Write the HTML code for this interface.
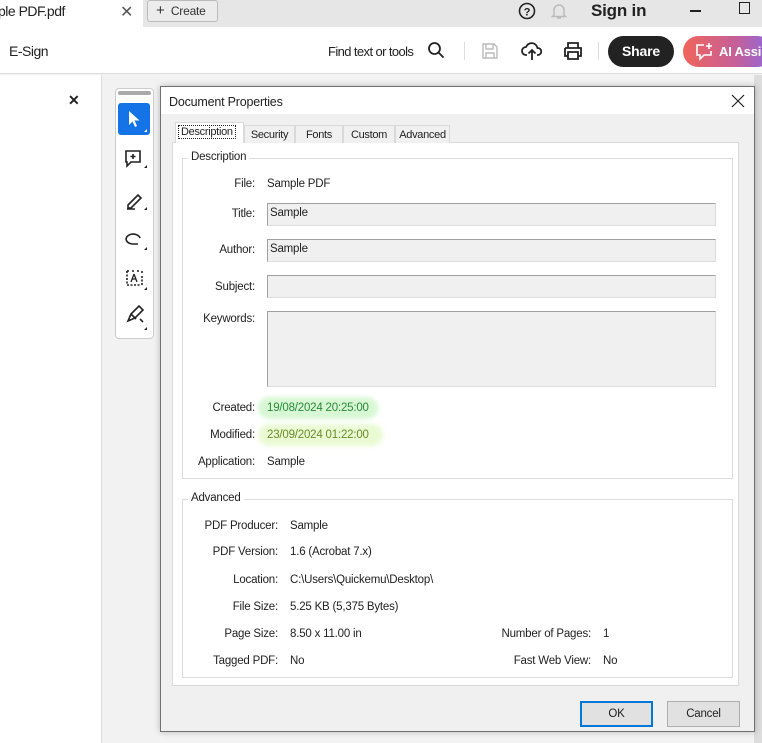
<!DOCTYPE html>
<html><head><meta charset="utf-8"><style>
*{box-sizing:border-box;margin:0;padding:0}
body{width:762px;height:743px;overflow:hidden;background:#f3f3f3;font-family:"Liberation Sans",sans-serif;font-size:11.5px;letter-spacing:-0.2px;color:#222;position:relative}
.a{position:absolute}
.lbl{position:absolute;text-align:right;white-space:nowrap}
.val{position:absolute;white-space:nowrap}
.inp{position:absolute;background:#f0f0f0;border:1px solid #a0a0a0;border-right-color:#ddd;border-bottom-color:#ddd;padding:3px 2px;font-size:11.5px}
.tab{position:absolute;top:125px;height:18px;border:1px solid #d9d9d9;border-bottom:none;background:#f0f0f0;font-size:11px;padding:3px 0;text-align:center;letter-spacing:-0.3px}
</style></head><body>
<div class="a" style="left:0;top:0;width:762px;height:27px;background:#e6e6e6"></div>
<div class="a" style="left:0;top:0;width:143px;height:27px;background:#fff"></div>
<div class="a" style="left:-2px;top:3px;font-size:14px;letter-spacing:-0.5px;color:#222">ple PDF.pdf</div>
<div class="a" style="left:120px;top:2px;font-size:16px;color:#555">✕</div>
<div class="a" style="left:147px;top:0;width:71px;height:22px;border:1px solid #bbb;border-radius:3px;background:#ececec;font-size:12px;padding:3px 0 0 8px;color:#333"><b style="font-size:15px;font-weight:normal;line-height:12px">+</b>&nbsp; Create</div>
<svg class="a" style="left:518px;top:2px" width="18" height="18"><circle cx="9" cy="9" r="7.5" fill="none" stroke="#222" stroke-width="1.6"/><text x="9" y="13.5" font-size="11" font-weight="bold" text-anchor="middle" fill="#222" font-family="Liberation Sans">?</text></svg>
<svg class="a" style="left:550px;top:2px" width="18" height="18"><path d="M4 13V8a5 5 0 0110 0v5l1.5 1.5h-13z M7 16h4" fill="none" stroke="#bbb" stroke-width="1.5"/></svg>
<div class="a" style="left:591px;top:1px;font-size:17px;font-weight:bold;color:#222">Sign in</div>
<div class="a" style="left:690px;top:10px;width:11px;height:2px;background:#222"></div>
<div class="a" style="left:739px;top:2px;width:11px;height:12px;border:1.5px solid #222"></div>
<div class="a" style="left:0;top:27px;width:762px;height:47px;background:#fff;border-bottom:1px solid #ddd"></div>
<div class="a" style="left:9px;top:43px;font-size:14px;letter-spacing:-0.5px">E-Sign</div>
<div class="a" style="left:328px;top:44px;font-size:13px;letter-spacing:-0.6px">Find text or tools</div>
<svg class="a" style="left:427px;top:41px" width="18" height="18"><circle cx="7.5" cy="7.5" r="5.5" fill="none" stroke="#222" stroke-width="1.8"/><path d="M11.5 11.5l5 5" stroke="#222" stroke-width="1.8"/></svg>
<div class="a" style="left:464px;top:42px;width:1px;height:18px;background:#ddd"></div>
<svg class="a" style="left:481px;top:42px" width="18" height="18"><path d="M2 2h11l3 3v11H2z M5 2v5h7V2 M5 16v-5h8v5" fill="none" stroke="#bbb" stroke-width="1.4"/></svg>
<svg class="a" style="left:521px;top:40px" width="22" height="22"><path d="M6 15H5a4 4 0 010-8 6 6 0 0111.5 1A3.5 3.5 0 0117 15h-1 M11 20V10 M7.5 13.5L11 10l3.5 3.5" fill="none" stroke="#222" stroke-width="1.8"/></svg>
<svg class="a" style="left:563px;top:41px" width="20" height="20"><path d="M5 7V2h10v5 M2 7h16v8h-3 M5 15H2V7 M5 11h10v7H5z" fill="none" stroke="#222" stroke-width="1.8"/></svg>
<div class="a" style="left:598px;top:42px;width:1px;height:18px;background:#ddd"></div>
<div class="a" style="left:608px;top:36px;width:66px;height:31px;border-radius:16px;background:#222;color:#fff;font-size:14px;font-weight:bold;text-align:center;line-height:31px">Share</div>
<div class="a" style="left:683px;top:36px;width:90px;height:31px;border-radius:16px;background:linear-gradient(90deg,#f0655a,#c45f9a 60%,#8c6ae0);color:#fff;font-size:13px;font-weight:bold;line-height:31px;padding-left:36px">AI Assis</div>
<svg class="a" style="left:695px;top:42px" width="18" height="19"><path d="M9 3H2v10h3v4l4-4h7V9" fill="none" stroke="#fff" stroke-width="1.6"/><path d="M14 1v6M11 4h6" stroke="#fff" stroke-width="1.6"/></svg>
<div class="a" style="left:0;top:75px;width:102px;height:668px;background:#fff;border-right:1px solid #ddd"></div>
<div class="a" style="left:68px;top:92px;font-size:14px;font-weight:bold">✕</div>
<div class="a" style="left:102px;top:75px;width:58px;height:668px;background:#f2f2f2"></div>
<div class="a" style="left:115px;top:88px;width:39px;height:251px;background:#fff;border:1px solid #ccc;border-radius:4px"></div>
<div class="a" style="left:118px;top:91px;width:33px;height:4px;background:#aaa;border-radius:2px"></div>
<div class="a" style="left:118px;top:103px;width:32px;height:32px;background:#1473e6;border-radius:3px"></div>
<svg class="a" style="left:118px;top:103px" width="32" height="32"><path d="M11 8v14l3.5-3.5 2.5 5.5 2-1-2.5-5.5h5z" fill="#fff"/><path d="M29 26v3h-3z" fill="#fff"/></svg>
<svg class="a" style="left:118px;top:147px" width="32" height="250"><g fill="none" stroke="#222" stroke-width="1.6"><path d="M8 4h14v11H13l-4 4v-4H8z M15 7v5M12.5 9.5h5"/><path d="M10 58l10-10 3 3-10 10H10z M9 62h8" /><path d="M22 91a7 5 0 10-8 6l6 0" /><path d="M9 124h2M14 124h2M19 124h2M24 124v2M9 124v14M9 138h14M24 129v9" stroke-dasharray="2 1.5"/><path d="M16 127l-3 8M16 127l3 8M14 132h4" stroke-width="1.3"/><path d="M10 174l3-7 8-8 4 4-8 8zM13 167l5 5M22 172l3 3" /></g><g fill="#222"><path d="M29 18v3h-3z"/><path d="M29 60v3h-3z"/><path d="M29 100v3h-3z"/><path d="M29 140v3h-3z"/><path d="M29 180v3h-3z"/></g></svg>
<div class="a" style="left:754px;top:75px;width:8px;height:668px;background:#ddd"></div>
<div class="a" style="left:160px;top:86px;width:595px;height:646px;background:#f0f0f0;border:1px solid #707070;box-shadow:0 0 6px rgba(0,0,0,.25)"></div>
<div class="a" style="left:161px;top:87px;width:593px;height:27px;background:#fff"></div>
<div class="a" style="left:169px;top:95px;font-size:12.5px">Document Properties</div>
<svg class="a" style="left:731px;top:94px" width="14" height="14"><path d="M1 1l12 12M13 1L1 13" stroke="#222" stroke-width="1.2"/></svg>
<div class="a" style="left:172px;top:142px;width:567px;height:544px;background:#fff;border:1px solid #d9d9d9"></div>
<div class="tab" style="left:244px;width:51px">Security</div>
<div class="tab" style="left:295px;width:48px">Fonts</div>
<div class="tab" style="left:343px;width:52px">Custom</div>
<div class="tab" style="left:395px;width:55px">Advanced</div>
<div class="a" style="left:175px;top:122px;width:69px;height:21px;background:#fff;border:1px solid #d9d9d9;border-bottom:none;padding:3px 2px;font-size:11px;letter-spacing:-0.3px"><span style="border:1px dotted #222;padding:0 2px">Description</span></div>
<div class="a" style="left:182px;top:158px;width:551px;height:321px;border:1px solid #dcdcdc"></div>
<div class="a" style="left:188px;top:151px;background:#fff;padding:0 3px">Description</div>
<div class="lbl" style="right:507px;top:178px">File:</div><div class="val" style="left:267px;top:178px">Sample PDF</div>
<div class="lbl" style="right:507px;top:208px">Title:</div><div class="inp" style="left:267px;top:203px;width:449px;height:23px">Sample</div>
<div class="lbl" style="right:507px;top:244px">Author:</div><div class="inp" style="left:267px;top:239px;width:449px;height:23px">Sample</div>
<div class="lbl" style="right:507px;top:281px">Subject:</div><div class="inp" style="left:267px;top:275px;width:449px;height:23px"></div>
<div class="lbl" style="right:507px;top:313px">Keywords:</div><div class="inp" style="left:267px;top:311px;width:449px;height:76px"></div>
<div class="a" style="left:258px;top:397px;width:120px;height:22px;border-radius:11px;background:#d8f7d4;filter:blur(2px)"></div>
<div class="a" style="left:258px;top:424px;width:125px;height:22px;border-radius:11px;background:#eafbd4;filter:blur(2px)"></div>
<div class="lbl" style="right:507px;top:402px">Created:</div><div class="val" style="left:267px;top:402px;color:#2a8a3a">19/08/2024 20:25:00</div>
<div class="lbl" style="right:507px;top:429px">Modified:</div><div class="val" style="left:267px;top:429px;color:#6a8a2a">23/09/2024 01:22:00</div>
<div class="lbl" style="right:507px;top:456px">Application:</div><div class="val" style="left:267px;top:456px">Sample</div>
<div class="a" style="left:182px;top:499px;width:551px;height:179px;border:1px solid #dcdcdc"></div>
<div class="a" style="left:188px;top:492px;background:#fff;padding:0 3px">Advanced</div>
<div class="lbl" style="right:484px;top:520px">PDF Producer:</div><div class="val" style="left:290px;top:520px">Sample</div>
<div class="lbl" style="right:484px;top:546px">PDF Version:</div><div class="val" style="left:290px;top:546px">1.6 (Acrobat 7.x)</div>
<div class="lbl" style="right:484px;top:574px">Location:</div><div class="val" style="left:290px;top:574px">C:\Users\Quickemu\Desktop\</div>
<div class="lbl" style="right:484px;top:601px">File Size:</div><div class="val" style="left:290px;top:601px">5.25 KB (5,375 Bytes)</div>
<div class="lbl" style="right:484px;top:628px">Page Size:</div><div class="val" style="left:290px;top:628px">8.50 x 11.00 in</div>
<div class="lbl" style="right:484px;top:655px">Tagged PDF:</div><div class="val" style="left:290px;top:655px">No</div>
<div class="lbl" style="right:171px;top:628px">Number of Pages:</div><div class="val" style="left:603px;top:628px">1</div>
<div class="lbl" style="right:171px;top:655px">Fast Web View:</div><div class="val" style="left:603px;top:655px">No</div>
<div class="a" style="left:580px;top:701px;width:73px;height:26px;background:#e1e1e1;border:2px solid #0078d7;text-align:center;line-height:22px">OK</div>
<div class="a" style="left:667px;top:701px;width:73px;height:26px;background:#e1e1e1;border:1px solid #adadad;text-align:center;line-height:24px">Cancel</div>
</body></html>
